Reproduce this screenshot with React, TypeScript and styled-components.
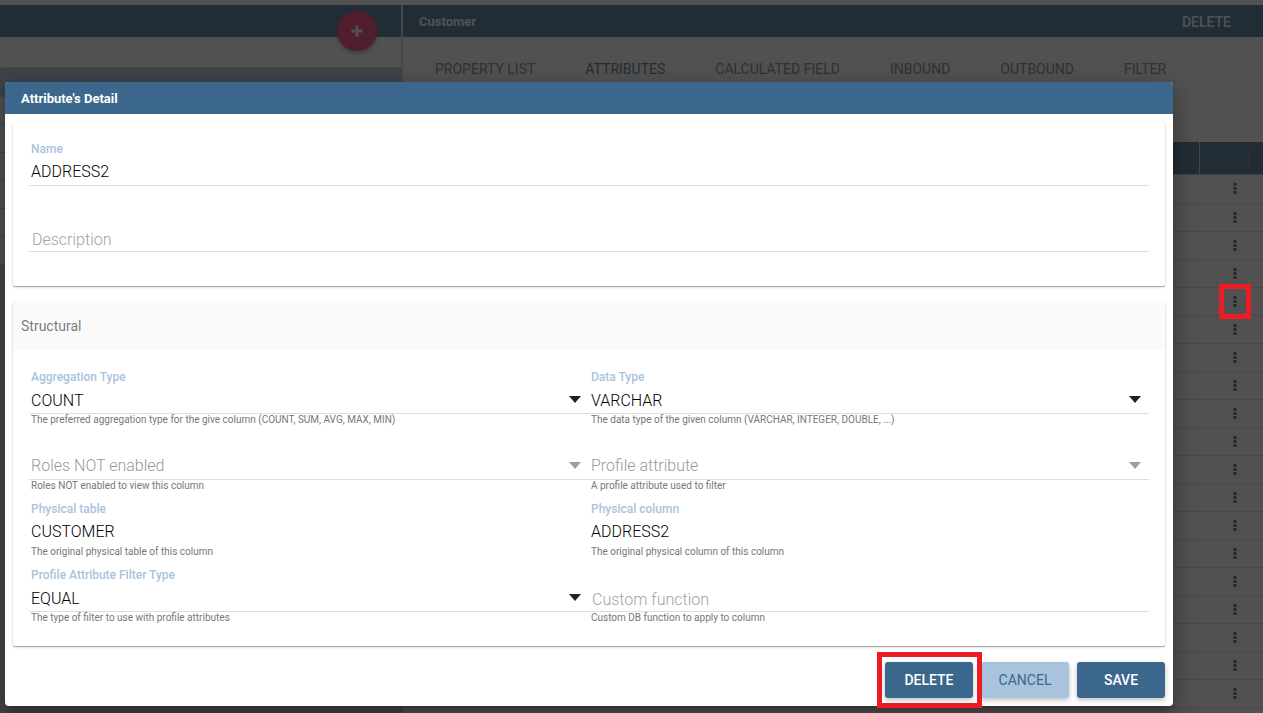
import React from "react";
import styled, { createGlobalStyle, css } from "styled-components";

const BLUE = "#3b678c";
const LIGHT_BLUE = "#a9c3dc";
const RED = "#ed1c24";

const GlobalStyle = createGlobalStyle`
  *, *::before, *::after { box-sizing: border-box; }
  body {
    margin: 0;
    background: #fff;
    font-family: Roboto, "Liberation Sans", sans-serif;
    color: rgba(0, 0, 0, 0.87);
  }
  button, input, select { font-family: inherit; margin: 0; }
`;

const Page = styled.div`
  position: relative;
  min-height: 100vh;
  overflow: hidden;
`;

const Workspace = styled.div`
  display: grid;
  grid-template-columns: 401px 1fr;
  gap: 2px;
  padding-top: 5px;
  min-height: 100vh;
  background: linear-gradient(#fff 5px, #d0d0d0 5px);
`;

const Sidebar = styled.aside`
  display: flex;
  flex-direction: column;
  background: #c4ccc4;
`;

const Toolbar = styled.header`
  display: flex;
  align-items: center;
  justify-content: space-between;
  height: 32px;
  flex-shrink: 0;
  padding: 2px 32px 0 16px;
  background: ${BLUE};
  color: #fff;
`;

const Title = styled.h2`
  margin: 0;
  font-size: 13px;
  line-height: 20px;
  font-weight: 700;
`;

const ToolbarButton = styled.button`
  border: 0;
  padding: 0;
  background: none;
  color: inherit;
  font-size: 14px;
  font-weight: 500;
  line-height: 20px;
`;

const SearchArea = styled.div`
  position: relative;
  height: 30px;
  background: #fff;
`;

const AddButton = styled.button`
  position: absolute;
  right: 24px;
  top: -26px;
  display: grid;
  place-items: center;
  width: 40px;
  height: 40px;
  border: 0;
  border-radius: 50%;
  padding: 0;
  background: #ff2a72;
  color: #fff;
  box-shadow: 0 2px 5px rgba(0, 0, 0, 0.4);
`;

const EntityList = styled.ul`
  margin: 0;
  padding: 0;
  list-style: none;
  border-top: 1px solid #d4d4d4;
`;

const EntityItem = styled.li<{ $selected?: boolean }>`
  height: ${(p) => (p.$selected ? 29 : 28)}px;
  border-bottom: 1px solid #c8c8c8;
  background: ${(p) => (p.$selected ? LIGHT_BLUE : "#fff")};
`;

const Main = styled.main`
  background: #fff;
`;

const Tabs = styled.nav`
  display: flex;
  gap: 2px;
  padding: 8px 8px 49px;
`;

const Tab = styled.button<{ $active?: boolean }>`
  height: 48px;
  border: 0;
  padding: 0 24px;
  background: none;
  font-size: 14px;
  line-height: 20px;
  white-space: nowrap;
  color: ${(p) => (p.$active ? BLUE : "#7c7c7c")};
`;

const AttributeTable = styled.table`
  width: 100%;
  border-spacing: 0;
  table-layout: fixed;
`;

const HeadCell = styled.th<{ $width?: number; $rule?: "full" | "short" }>`
  height: 33px;
  width: ${(p) => (p.$width ? `${p.$width}px` : "auto")};
  padding: 0;
  border-bottom: 1px solid #bbb;
  background: ${BLUE};
  ${(p) => p.$rule === "full" && css`border-right: 1px solid #c4ccd4;`}
  ${(p) =>
    p.$rule === "short" &&
    css`
      background: linear-gradient(#7f98ae, #7f98ae) right 0 top 8px / 1px 20px no-repeat ${BLUE};
    `}
`;

const Row = styled.tr`
  height: 28px;
  &:first-child { height: 29px; }
`;

const Cell = styled.td`
  padding: 0;
  border-bottom: 1px solid #dadada;
  vertical-align: top;
`;

const RowMenu = styled.button<{ $marked?: boolean }>`
  position: relative;
  display: block;
  width: 30px;
  height: 27px;
  margin-left: auto;
  border: 0;
  padding: 0;
  background: none;
  color: #505050;
  svg { display: block; margin: 0 auto; }
  ${(p) =>
    p.$marked &&
    css`
      &::after {
        content: "";
        position: absolute;
        z-index: 3;
        inset: -4px -1px;
        border: 5px solid ${RED};
      }
    `}
`;

const Backdrop = styled.div`
  position: absolute;
  z-index: 1;
  inset: 0;
  background: rgba(26, 26, 26, 0.76);
`;

const DialogLayer = styled.div`
  position: absolute;
  z-index: 2;
  inset: 0;
  padding: 82px 90px 7px 5px;
`;

const Dialog = styled.section`
  border-radius: 4px;
  background: #fff;
  box-shadow: 0 7px 8px -4px rgba(0, 0, 0, 0.2),
    0 13px 19px 2px rgba(0, 0, 0, 0.14), 0 5px 24px 4px rgba(0, 0, 0, 0.12);
`;

const DialogToolbar = styled(Toolbar)`
  border-radius: 4px 4px 0 0;
`;

const DialogBody = styled.form`
  display: flex;
  flex-direction: column;
  gap: 16px;
  padding: 8px;
`;

const Card = styled.section`
  border-radius: 2px;
  background: #fff;
  box-shadow: 0 1px 3px rgba(0, 0, 0, 0.2), 0 1px 1px rgba(0, 0, 0, 0.14),
    0 2px 1px -1px rgba(0, 0, 0, 0.12);
`;

const CardHeader = styled.h3`
  margin: 0;
  padding: 0 8px;
  background: #fafafa;
  color: rgba(0, 0, 0, 0.54);
  font-size: 14px;
  line-height: 48px;
  font-weight: 400;
`;

const FieldGrid = styled.div<{ $columns?: number }>`
  display: grid;
  grid-template-columns: repeat(${(p) => p.$columns ?? 1}, 1fr);
  padding: 16px;
`;

const FieldBox = styled.div`
  height: 66px;
`;

const Label = styled.label`
  display: block;
  height: 20px;
  padding-left: 2px;
  color: ${LIGHT_BLUE};
  font-size: 12px;
  font-weight: 500;
  line-height: 22px;
`;

const ControlSlot = styled.div<{ $plain?: boolean }>`
  display: grid;
  align-items: center;
  height: 28px;
  border-bottom: 1px solid ${(p) => (p.$plain ? "transparent" : "#dedede")};
  & > * { grid-area: 1 / 1; }
`;

const controlText = css`
  width: 100%;
  height: 27px;
  border: 0;
  outline: 0;
  background: transparent;
  font-size: 16px;
  font-weight: 300;
`;

const TextInput = styled.input`
  ${controlText}
  padding: 0 2px;
  color: #000;
  &::placeholder { color: #a2a2a2; opacity: 1; }
  &:placeholder-shown { padding: 3px 3px 0; }
`;

const Select = styled.select<{ $empty?: boolean }>`
  ${controlText}
  appearance: none;
  padding: ${(p) => (p.$empty ? 0 : 2)}px 24px 0 2px;
  color: ${(p) => (p.$empty ? "#999" : "#000")};
`;

const Arrow = styled.svg<{ $empty?: boolean }>`
  justify-self: end;
  margin-right: 8px;
  pointer-events: none;
  fill: ${(p) => (p.$empty ? "#9e9e9e" : "#212121")};
`;

const Hint = styled.p`
  margin: 0;
  padding-left: 2px;
  color: #777;
  font-size: 10px;
  line-height: 12px;
`;

const Actions = styled.footer`
  display: flex;
  justify-content: flex-end;
  gap: 8px;
`;

const ActionButton = styled.button<{ $secondary?: boolean; $marked?: boolean }>`
  position: relative;
  width: 88px;
  height: 36px;
  border: 0;
  border-radius: 3px;
  padding: 0;
  font-size: 14px;
  font-weight: ${(p) => (p.$secondary ? 400 : 500)};
  background: ${(p) => (p.$secondary ? LIGHT_BLUE : BLUE)};
  color: ${(p) => (p.$secondary ? BLUE : "#fff")};
  box-shadow: 0 2px 5px rgba(0, 0, 0, 0.26);
  ${(p) =>
    p.$marked &&
    css`
      z-index: 1;
      &::after {
        content: "";
        position: absolute;
        inset: -10px -9px -10px -8px;
        border: 5px solid ${RED};
      }
    `}
`;

type FieldProps = {
  id: string;
  label: string;
  value?: string;
  hint?: string;
  kind?: "text" | "select" | "readonly";
};

function Field({ id, label, value = "", hint, kind = "text" }: FieldProps) {
  const empty = value === "";
  return (
    <FieldBox>
      <Label htmlFor={id}>{empty ? "" : label}</Label>
      <ControlSlot $plain={kind === "readonly"}>
        {kind === "select" ? (
          <>
            <Select id={id} $empty={empty} aria-label={label}>
              <option>{empty ? label : value}</option>
            </Select>
            <Arrow $empty={empty} width="12" height="7" viewBox="0 0 12 7" aria-hidden>
              <path d="M0 0h12L6 7z" />
            </Arrow>
          </>
        ) : (
          <TextInput
            id={id}
            aria-label={label}
            defaultValue={value}
            placeholder={label}
            readOnly={kind === "readonly"}
          />
        )}
      </ControlSlot>
      {hint && <Hint>{hint}</Hint>}
    </FieldBox>
  );
}

const TABS = ["PROPERTY LIST", "ATTRIBUTES", "CALCULATED FIELD", "INBOUND", "OUTBOUND", "FILTER"];
const ROWS = Array.from({ length: 19 }, (_, i) => i);
const ENTITIES = Array.from({ length: 7 }, (_, i) => i);

const STRUCTURAL: FieldProps[] = [
  { id: "aggregation", label: "Aggregation Type", value: "COUNT", kind: "select", hint: "The preferred aggregation type for the give column (COUNT, SUM, AVG, MAX, MIN)" },
  { id: "dataType", label: "Data Type", value: "VARCHAR", kind: "select", hint: "The data type of the given column (VARCHAR, INTEGER, DOUBLE, ...)" },
  { id: "roles", label: "Roles NOT enabled", kind: "select", hint: "Roles NOT enabled to view this column" },
  { id: "profile", label: "Profile attribute", kind: "select", hint: "A profile attribute used to filter" },
  { id: "table", label: "Physical table", value: "CUSTOMER", kind: "readonly", hint: "The original physical table of this column" },
  { id: "column", label: "Physical column", value: "ADDRESS2", kind: "readonly", hint: "The original physical column of this column" },
  { id: "filterType", label: "Profile Attribute Filter Type", value: "EQUAL", kind: "select", hint: "The type of filter to use with profile attributes" },
  { id: "custom", label: "Custom function", hint: "Custom DB function to apply to column" },
];

export default function App() {
  return (
    <Page>
      <GlobalStyle />
      <Workspace>
        <Sidebar>
          <Toolbar />
          <SearchArea>
            <AddButton aria-label="Add">
              <svg width="12" height="12" viewBox="0 0 12 12" fill="currentColor" aria-hidden>
                <path d="M4.5 0.5h3v4h4v3h-4v4h-3v-4h-4v-3h4z" />
              </svg>
            </AddButton>
          </SearchArea>
          <EntityList>
            {ENTITIES.map((i) => (
              <EntityItem key={i} $selected={i === 0} />
            ))}
          </EntityList>
        </Sidebar>
        <Main>
          <Toolbar>
            <Title>Customer</Title>
            <ToolbarButton>DELETE</ToolbarButton>
          </Toolbar>
          <Tabs>
            {TABS.map((tab) => (
              <Tab key={tab} $active={tab === "ATTRIBUTES"}>{tab}</Tab>
            ))}
          </Tabs>
          <AttributeTable>
            <thead>
              <tr>
                <HeadCell $rule="full" />
                <HeadCell $width={50} $rule="short" />
                <HeadCell $width={13} />
              </tr>
            </thead>
            <tbody>
              {ROWS.map((i) => (
                <Row key={i}>
                  <Cell />
                  <Cell>
                    <RowMenu $marked={i === 4} aria-label="Row menu">
                      <svg width="4" height="11" viewBox="0 0 4 11" fill="currentColor" aria-hidden>
                        <path d="M0.5 0h3v3h-3zM0.5 4h3v3h-3zM0.5 8h3v3h-3z" />
                      </svg>
                    </RowMenu>
                  </Cell>
                  <Cell />
                </Row>
              ))}
            </tbody>
          </AttributeTable>
        </Main>
      </Workspace>
      <Backdrop />
      <DialogLayer>
        <Dialog role="dialog" aria-labelledby="dialog-title">
          <DialogToolbar>
            <Title id="dialog-title">Attribute's Detail</Title>
          </DialogToolbar>
          <DialogBody onSubmit={(e) => e.preventDefault()}>
            <Card>
              <FieldGrid>
                <Field id="name" label="Name" value="ADDRESS2" />
                <Field id="description" label="Description" />
              </FieldGrid>
            </Card>
            <Card>
              <CardHeader>Structural</CardHeader>
              <FieldGrid $columns={2}>
                {STRUCTURAL.map((field) => (
                  <Field key={field.id} {...field} />
                ))}
              </FieldGrid>
            </Card>
            <Actions>
              <ActionButton type="button" $marked>DELETE</ActionButton>
              <ActionButton type="button" $secondary>CANCEL</ActionButton>
              <ActionButton type="submit">SAVE</ActionButton>
            </Actions>
          </DialogBody>
        </Dialog>
      </DialogLayer>
    </Page>
  );
}
